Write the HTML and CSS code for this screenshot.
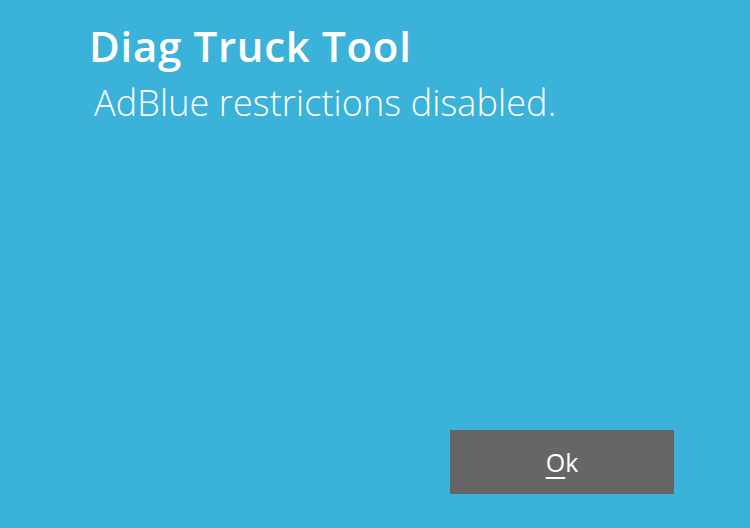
FILE: index.html
```html
<!DOCTYPE html>
<html>
<head>
<meta charset="utf-8">
<link rel="stylesheet" href="styles.css">
</head>
<body>
<div class="dialog">
  <div class="content">
    <div class="title">Diag Truck Tool</div>
    <div class="message">AdBlue restrictions disabled.</div>
  </div>
  <div class="actions">
    <button class="btn"><span class="acc">O</span>k</button>
  </div>
</div>
</body>
</html>
```
FILE: styles.css
```css
html, body {
  margin: 0;
  padding: 0;
  background: #3ab2d9;
}
.dialog {
  width: 750px;
  height: 528px;
  display: flex;
  flex-direction: column;
  box-sizing: border-box;
  padding: 18px 76px 34px 89px;
  font-family: "Open Sans", "Noto Sans", sans-serif;
  color: #ffffff;
}
.content {
  flex: 1;
}
.title {
  font-size: 42px;
  font-weight: 600;
  line-height: 56px;
  letter-spacing: 0.7px;
}
.message {
  font-size: 36px;
  font-weight: 300;
  line-height: 50px;
  margin-top: 4px;
  margin-left: 5px;
  letter-spacing: 0.1px;
}
.actions {
  display: flex;
  justify-content: flex-end;
}
.btn {
  width: 224px;
  height: 64px;
  background: #666666;
  border: none;
  color: #ffffff;
  font-family: "Open Sans", "Noto Sans", sans-serif;
  font-size: 25px;
  padding: 0;
}
.acc {
  text-decoration: underline;
  text-decoration-thickness: 2px;
  text-underline-offset: 5px;
}
```
